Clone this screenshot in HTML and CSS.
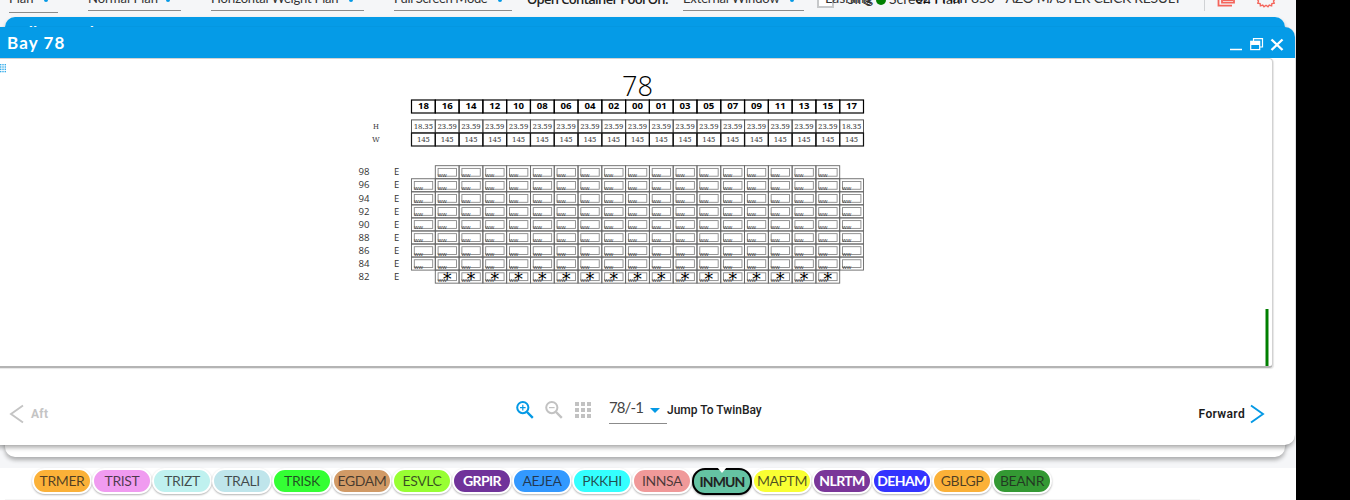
FILE: index.html
```html
<!DOCTYPE html>
<html lang="en">
<head>
<meta charset="utf-8">
<title>Bay 78</title>
<link rel="stylesheet" href="styles.css">
</head>
<body>
<div class="app">
  <header class="toolbar">
    <div class="field plan low"><span>Plan</span><i></i></div>
    <div class="field normal"><span>Normal Plan</span><i></i></div>
    <div class="field weight"><span>Horizontal Weight Plan</span><i></i></div>
    <div class="field mode"><span>Full Screen Mode</span><i></i></div>
    <div class="pool">Open Container Pool On:</div>
    <div class="field external"><span>External Window</span><i></i></div>
    <span class="check"></span>
    <div class="status">
      <span class="t lash">Lashing</span><span class="t single">Sing</span><b class="dot"></b>
      <span class="t screen">Screen Plan</span><span class="t count">024 Plan</span>
      <span class="t result">850 - AZO MASTER CLICK RESULT</span>
    </div>
    <svg class="tools" width="80" height="17" viewBox="0 0 80 17"><path d="M1.500 0V11" stroke="#d0d2d5"/><g fill="none" stroke="#f4655b" stroke-width="1.800"><path d="M19 0V2.700H31V0M15.500 0V5.700H29M20 0H30"/><path stroke-width="1.400" d="M54.500 0l1 1-.7 2.200 2.300.3.300 2.300 2.300-.7 1.300 1.700 2-1.500 2 1.500 1.300-1.700 2.300.7.300-2.300 2.300-.3-.7-2.200 1-1"/></g></svg>
  </header>

  <section class="window rear"><div class="bar"><span>Ballast Tank</span></div></section>

  <section class="window front">
    <div class="bar">
      <h1>Bay 78</h1>
      <svg class="controls" width="56" height="18" viewBox="0 0 56 18"><path d="M0 14.500H12" stroke="#fff" stroke-width="1.500"/><g fill="none" stroke="#fff" stroke-width="1.200"><path d="M23.500 6V3.600H32.500V12H30"/><rect x="20.700" y="6.300" width="9" height="8.300"/></g><path d="M21 6h9v4h-9z" fill="#fff"/><path d="M41.500 4.500l11 10.500M52.500 4.500l-11 10.500" stroke="#fff" stroke-width="2.400"/></svg>
    </div>
    <div class="panel">
      <svg id="bay" class="bay" viewBox="0 59 1272 307" width="1272" height="307"></svg>
      <div class="level"></div>
    </div>
    <footer class="nav">
      <div class="aft"><svg width="16" height="20" viewBox="0 0 16 20"><path d="M14 1.500L2 10l12 8.500" fill="none" stroke="#c4c4c4" stroke-width="1.900"/></svg><span>Aft</span></div>
      <div class="center">
        <svg width="18" height="18" viewBox="0 0 18 18"><g fill="none" stroke="#0499e5" stroke-width="2"><circle cx="6.800" cy="6.600" r="5.600"/><path stroke-width="2.400" d="M11 11l5.800 5.800"/><path stroke-width="1.200" d="M4 6.600h5.600M6.800 3.800v5.600"/></g></svg>
        <svg class="minus" width="18" height="18" viewBox="0 0 18 18"><g fill="none" stroke="#c2c2c2" stroke-width="2"><circle cx="6.800" cy="6.600" r="5.600"/><path stroke-width="2.400" d="M11 11l5.800 5.800"/><path stroke-width="1.200" d="M4 6.600h5.600"/></g></svg>
        <svg class="gridicon" width="16" height="16" viewBox="0 0 16 16"><path fill="#c2c2c2" d="M0 0h4v4H0zM6 0h4v4H6zM12 0h4v4h-4zM0 6h4v4H0zM6 6h4v4H6zM12 6h4v4h-4zM0 12h4v4H0zM6 12h4v4H6zM12 12h4v4h-4z"/></svg>
        <div class="select"><span>78/-1</span><i></i></div>
        <span class="jump">Jump To TwinBay</span>
      </div>
      <div class="forward"><span>Forward</span><svg width="16" height="20" viewBox="0 0 16 20"><path d="M2 1.500L14 10 2 18.500" fill="none" stroke="#0499e5" stroke-width="1.900"/></svg></div>
    </footer>
  </section>

  <div class="ports">
    <span class="chip trmer">TRMER</span><span class="chip trist">TRIST</span><span class="chip trizt">TRIZT</span><span class="chip trali">TRALI</span><span class="chip trisk">TRISK</span><span class="chip egdam">EGDAM</span><span class="chip esvlc">ESVLC</span><span class="chip grpir strong">GRPIR</span><span class="chip aejea">AEJEA</span><span class="chip pkkhi">PKKHI</span><span class="chip innsa">INNSA</span><span class="chip inmun">INMUN</span><span class="chip maptm">MAPTM</span><span class="chip nlrtm strong">NLRTM</span><span class="chip deham strong">DEHAM</span><span class="chip gblgp">GBLGP</span><span class="chip beanr">BEANR</span>
  </div>
  <div class="cards"></div>
</div>
<script src="bay.js"></script>
</body>
</html>
```
FILE: styles.css
```css
* { box-sizing: border-box; }
body { margin: 0; background: #000; overflow: hidden; font-family: Lato, "Open Sans", sans-serif; }
.app { position: relative; width: 1296px; height: 500px; background: #f5f6f8; overflow: hidden; }

.toolbar { display: flex; height: 17px; color: #333; font-size: 13px; white-space: nowrap; overflow: hidden; }
.field { display: flex; justify-content: space-between; height: 11px; border-bottom: 1px solid #8b8b8b; line-height: 18px; padding-right: 11px; }
.field span { margin-top: -11px; }
.field i { width: 4px; height: 2px; background: #0499e5; border-radius: 0 0 2px 2px; }
.plan { width: 49px; margin-left: 9px; padding-right: 10px; }
.low { height: 13px; }
.normal { width: 93px; margin-left: 30px; }
.weight { width: 153px; margin-left: 30px; letter-spacing: -.2px; }
.mode { width: 118px; margin-left: 30px; letter-spacing: -.35px; padding-right: 10px; }
.pool { width: 142px; margin: -10px 14px 0 15px; font: 600 13px/18px "Open Sans", sans-serif; color: #222; letter-spacing: -.65px; }
.external { width: 121px; padding-right: 10px; letter-spacing: -.15px; }
.check { width: 17px; height: 8px; margin-left: 13px; border: 2px solid #c6c8ca; border-top: 0; background: #fff; }
.status { position: relative; width: 370px; height: 17px; margin-left: -9px; }
.t { position: absolute; top: -11px; line-height: 18px; font-size: 14px; }
.lash { left: 0; }
.single { left: 22px; top: -10px; }
.screen { left: 64px; top: -10px; }
.count { left: 90px; color: #111; letter-spacing: -.3px; }
.result { left: 146px; letter-spacing: -.3px; }
.dot { position: absolute; left: 51px; top: -5px; width: 10px; height: 10px; border-radius: 50%; background: #008000; }
.tools { margin-left: 8px; }

.window { position: absolute; background: #fff; }
.bar { background: #059be7; color: #fff; overflow: hidden; }
.rear { left: 5px; top: 17px; width: 1280px; height: 440px; border-radius: 10px; box-shadow: 0 3px 4px rgba(0,0,0,.3); }
.rear .bar { height: 31px; border-radius: 10px 10px 0 0; padding: 5px 0 0 4px; font-weight: 700; font-size: 17px; line-height: 22px; }
.front { left: -10px; top: 27px; width: 1305px; height: 418px; border-radius: 10px; box-shadow: 0 4px 4px -1px rgba(0,0,0,.3), 0 0 1px rgba(0,0,0,.25); }
.front .bar { display: flex; justify-content: space-between; height: 31px; border-radius: 10px 10px 0 0; padding: 8px 9px 0 17px; }
h1 { margin: -1px 0 0; font-size: 17px; line-height: 18px; font-weight: 700; letter-spacing: 1.1px; }
.panel { position: relative; width: 1283px; height: 310px; padding-left: 9px; border: 1px solid #d2d2d2; border-bottom: 2px solid #b4b4b4; border-radius: 0 4px 4px 0; box-shadow: 1px 1px 1px rgba(0,0,0,.1); }
.bay { display: block; }
.level { position: absolute; right: 3px; bottom: 0; width: 4px; height: 57px; border: solid #82bd82; border-width: 0 1px; background: #008000; }
.nav { display: flex; height: 76px; padding: 0 30px 0 19px; }
.aft, .forward { display: flex; align-items: center; height: 20px; margin-top: 36px; font-family: Roboto, sans-serif; font-weight: 700; font-size: 12px; }
.aft { width: 70px; gap: 6px; color: #c4c4c4; letter-spacing: .3px; }
.forward { gap: 4px; margin-left: auto; font-weight: 600; color: #1b1b1b; letter-spacing: .35px; }
.center { display: flex; align-items: flex-start; width: 260px; margin: 33px 0 0 437px; }
.minus { margin-left: 11px; }
.center > svg { flex: none; }
.gridicon { margin: 1px 18px 0 12px; }
.select { display: flex; align-items: flex-start; justify-content: space-between; flex: none; width: 58px; height: 23px; padding-right: 7px; border-bottom: 1px solid #8b8b8b; font-size: 15px; line-height: 16px; color: #444; letter-spacing: -.9px; }
.select span { margin-top: -2px; }
.select i { margin-top: 7px; border: 5px solid transparent; border-top-color: #0499e5; border-bottom: 0; }
.jump { margin-top: 1px; font: 500 12px/16px Roboto, sans-serif; color: #222; white-space: nowrap; }

.ports { position: absolute; left: 0; top: 468px; width: 1296px; height: 32px; display: flex; padding-left: 32px; background: #fff; }
.chip { position: relative; display: flex; justify-content: center; align-items: center; width: 60px; height: 26px; padding-bottom: 1px; border: 2px solid #fff; border-radius: 13px; box-shadow: 0 1px 2px rgba(0,0,0,.3); font-size: 14px; color: rgba(30,30,30,.78); letter-spacing: -.4px; }
.strong { color: #fff; font-weight: 700; letter-spacing: -.6px; }
.trmer, .gblgp { background: #fbb138; }
.trist { background: #f09bf0; }
.trizt { background: #bff1ef; }
.trali { background: #bfe5eb; }
.trisk { background: #34ff34; }
.egdam { background: #d19a66; }
.esvlc { background: #98ff33; }
.grpir { background: #70339a; }
.aejea { background: #3399ff; }
.pkkhi { background: #34ffff; }
.innsa { background: #f09999; }
.inmun { background: #65c3a3; border-color: #000; height: 27px; color: #222; font-weight: 700; letter-spacing: -.9px; }
.inmun::before { content: ""; position: absolute; top: -3px; left: 23px; border: 5px solid transparent; border-top: 6px solid #fff; border-bottom: 0; }
.maptm { background: #f9ff33; }
.nlrtm { background: #7a3699; }
.deham { background: #3333ff; }
.beanr { background: #339933; }
.cards { position: absolute; left: 5px; top: 499px; width: 1195px; height: 1px; background: #f5f5f5; }

.num { font: 700 9.5px "Noto Sans", sans-serif; text-anchor: middle; }
.val { font: 7.5px "Noto Serif", "DejaVu Serif", serif; text-anchor: middle; fill: #444; }
.tier { font: 9.5px "Open Sans", sans-serif; fill: #333; }
.big { font: 300 27px "Open Sans", sans-serif; text-anchor: middle; }
.ww { font: 4.5px "Open Sans", sans-serif; fill: #333; }
.star { font: 400 18px "DejaVu Sans", sans-serif; text-anchor: middle; }
```
FILE: bay.js
```js
const columns = ["18","16","14","12","10","08","06","04","02","00","01","03","05","07","09","11","13","15","17"];
const tiers = [98, 96, 94, 92, 90, 88, 86, 84, 82];
const pitch = 452 / 19;
let out = "";
const box = (x, y, w, h, color, sw = 1) => { out += `<rect x="${x}" y="${y}" width="${w}" height="${h}" fill="none" stroke="${color}" stroke-width="${sw}"/>`; };
const text = (x, y, cls, s, extra = "") => { out += `<text x="${x}" y="${y}" class="${cls}" ${extra}>${s}</text>`; };

text(637.5, 96, "big", "78", 'textLength="31" lengthAdjust="spacingAndGlyphs"');
text(376, 129, "val", "H");
text(376, 142, "val", "W");
columns.forEach((c, i) => {
  const x = 411.5 + i * pitch, mid = x + pitch / 2;
  box(x, 100, pitch, 13, "#000", 1.2);
  box(x, 119.9, pitch, 13, "#555");
  box(x, 133, pitch, 13, "#111", 1.2);
  text(mid, 109, "num", c, 'textLength="11" lengthAdjust="spacingAndGlyphs"');
  text(mid, 129.3, "val", i === 0 || i === 18 ? "18.35" : "23.59", 'textLength="19.5" lengthAdjust="spacingAndGlyphs"');
  text(mid, 142.3, "val", "145", 'textLength="13" lengthAdjust="spacingAndGlyphs"');
});
tiers.forEach((t, r) => {
  const y = 165.7 + r * 13.05;
  const labelY = y + 9.7;
  text(358.5, labelY, "tier", t, 'textLength="11" lengthAdjust="spacingAndGlyphs"');
  text(394, labelY, "tier", "E");
  columns.forEach((c, i) => {
    if ((r === 0 || r === 8) && (i === 0 || i === 18)) return;
    const x = 411.5 + i * pitch;
    box(x, y, pitch, 13.05, "#666", .9);
    box(x + 2.8, y + 2.7, 18.4, 7.8, "#888", .9);
    text(x + 2.5, y + 11.5, "ww", "ww", 'textLength="9" lengthAdjust="spacingAndGlyphs"');
    if (r === 8) text(x + pitch / 2, y + 15.3, "star", "*");
  });
});
for (let y = 64; y < 71; y += 2.3) for (let x = 0; x < 6; x += 2.3)
  out += `<rect x="${x}" y="${y}" width="1.4" height="1.4" fill="#35adeb"/>`;
document.getElementById("bay").innerHTML = out;
```
